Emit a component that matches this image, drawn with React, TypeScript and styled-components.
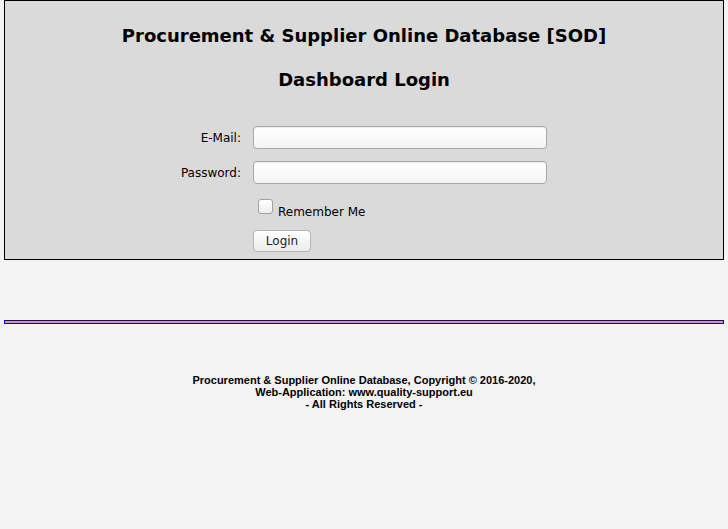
import styled, { createGlobalStyle } from 'styled-components';

const Global = createGlobalStyle`
  html, body {
    margin: 0;
    padding: 0;
    background: #f3f3f3;
  }
  body {
    font-family: "DejaVu Sans", Verdana, sans-serif;
    color: #000;
  }
`;

const Page = styled.div`
  padding: 0 4px;
`;

const LoginBox = styled.div`
  background: #dadada;
  border: 1px solid #000;
  padding: 0 0 7px;
`;

const Title = styled.h1`
  margin: 0;
  padding-top: 24px;
  font-size: 18px;
  font-weight: bold;
  text-align: center;
  line-height: 22px;
`;

const SubTitle = styled.h2`
  margin: 22px 0 0;
  font-size: 18px;
  font-weight: bold;
  text-align: center;
  line-height: 22px;
`;

const Form = styled.div`
  display: grid;
  grid-template-columns: 232px 294px;
  column-gap: 12px;
  row-gap: 12px;
  justify-content: start;
  margin-top: 35px;
  margin-left: 4px;
`;

const Label = styled.label`
  font-size: 12px;
  text-align: right;
  align-self: center;
`;

const Input = styled.input`
  box-sizing: border-box;
  width: 294px;
  height: 23px;
  border: 1px solid #a9a9a9;
  border-radius: 4px;
  background: linear-gradient(#ffffff, #f4f4f4);
  box-shadow: inset 0 1px 1px rgba(0, 0, 0, 0.08);
  outline: none;
`;

const Spacer = styled.div``;

const CheckRow = styled.label`
  display: flex;
  align-items: flex-start;
  gap: 5px;
  padding-left: 5px;
  font-size: 12px;
  line-height: 15px;
`;

const Check = styled.span`
  display: inline-block;
  box-sizing: border-box;
  width: 15px;
  height: 15px;
  margin-top: 3px;
  border: 1px solid #a0a0a0;
  border-radius: 3px;
  background: linear-gradient(#ffffff, #ececec);
`;

const CheckText = styled.span`
  padding-top: 9px;
`;

const Button = styled.button`
  display: block;
  box-sizing: border-box;
  width: 58px;
  height: 22px;
  margin-top: -2px;
  padding: 0;
  border: 1px solid #b5b5b5;
  border-radius: 4px;
  background: linear-gradient(#ffffff, #ececec);
  font-family: "DejaVu Sans", Verdana, sans-serif;
  font-size: 12px;
  color: #222;
`;

const Rule = styled.div`
  height: 2px;
  margin-top: 60px;
  border: 1px solid #0000cc;
  background: #e6a13a;
`;

const Footer = styled.footer`
  margin-top: 50px;
  text-align: center;
  font-family: "Liberation Sans", Arial, sans-serif;
  font-size: 11px;
  font-weight: bold;
  line-height: 12px;
`;

export default function App() {
  return (
    <Page>
      <Global />
      <LoginBox>
        <Title>Procurement &amp; Supplier Online Database [SOD]</Title>
        <SubTitle>Dashboard Login</SubTitle>
        <Form>
          <Label htmlFor="email">E-Mail:</Label>
          <Input id="email" type="text" />
          <Label htmlFor="pw">Password:</Label>
          <Input id="pw" type="password" />
          <Spacer />
          <CheckRow>
            <Check />
            <CheckText>Remember Me</CheckText>
          </CheckRow>
          <Spacer />
          <div>
            <Button>Login</Button>
          </div>
        </Form>
      </LoginBox>
      <Rule />
      <Footer>
        Procurement &amp; Supplier Online Database, Copyright © 2016-2020,
        <br />
        Web-Application: www.quality-support.eu
        <br />
        - All Rights Reserved -
      </Footer>
    </Page>
  );
}
